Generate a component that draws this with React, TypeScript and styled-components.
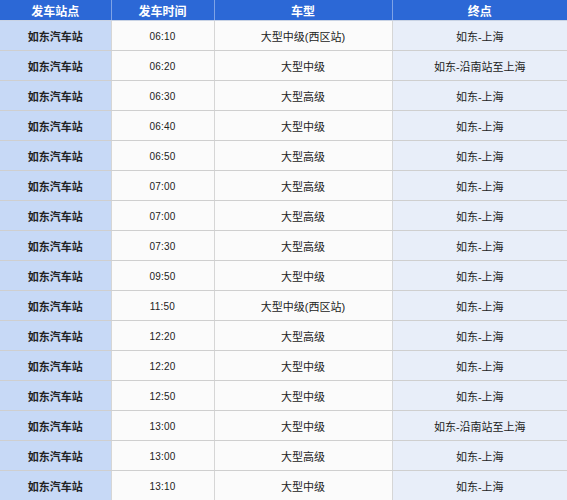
import React from 'react'
import styled, { createGlobalStyle } from 'styled-components'

const GlobalStyle = createGlobalStyle`
    html, body {
        margin: 0;
        padding: 0;
        background: #ffffff;
    }
`;

const Table = styled.table`
    width: 567px;
    border-collapse: collapse;
    table-layout: fixed;
    font-family: "Liberation Sans", "Noto Sans CJK SC", sans-serif;
    font-size: 11px;
    color: #222222;
`;

const HeadCell = styled.th`
    height: 20px;
    padding: 0;
    background: #2c68d6;
    color: #ffffff;
    font-weight: bold;
    font-size: 12px;
    text-align: center;
    border-right: 1px solid #7fa3e6;
    border-bottom: 1px solid #c9d3e4;
    &:last-child { border-right: none; }
`;

const Cell = styled.td<{ $tone: 'station' | 'plain' | 'dest' }>`
    height: 29px;
    padding: 0;
    text-align: center;
    border-bottom: 1px solid #cfcfcf;
    border-right: 1px solid #d6d6d6;
    background: ${p => p.$tone === 'station' ? '#c7d9f6' : p.$tone === 'dest' ? '#e8eef9' : '#fbfbfb'};
    font-weight: ${p => p.$tone === 'station' ? 'bold' : 'normal'};
    &:last-child { border-right: none; }
`;

const Time = styled.span`
    font-family: "Liberation Sans", sans-serif;
    font-size: 10px;
    letter-spacing: 0.2px;
`;

const rows: [string, string, string][] = [
    ['06:10', '大型中级(西区站)', '如东-上海'],
    ['06:20', '大型中级', '如东-沿南站至上海'],
    ['06:30', '大型高级', '如东-上海'],
    ['06:40', '大型中级', '如东-上海'],
    ['06:50', '大型高级', '如东-上海'],
    ['07:00', '大型高级', '如东-上海'],
    ['07:00', '大型高级', '如东-上海'],
    ['07:30', '大型高级', '如东-上海'],
    ['09:50', '大型中级', '如东-上海'],
    ['11:50', '大型中级(西区站)', '如东-上海'],
    ['12:20', '大型高级', '如东-上海'],
    ['12:20', '大型中级', '如东-上海'],
    ['12:50', '大型中级', '如东-上海'],
    ['13:00', '大型中级', '如东-沿南站至上海'],
    ['13:00', '大型高级', '如东-上海'],
    ['13:10', '大型中级', '如东-上海'],
];

export default function App() {
    return (
        <>
            <GlobalStyle />
            <Table>
                <colgroup>
                    <col style={{ width: 111 }} />
                    <col style={{ width: 103 }} />
                    <col style={{ width: 178 }} />
                    <col style={{ width: 175 }} />
                </colgroup>
                <thead>
                    <tr>
                        <HeadCell>发车站点</HeadCell>
                        <HeadCell>发车时间</HeadCell>
                        <HeadCell>车型</HeadCell>
                        <HeadCell>终点</HeadCell>
                    </tr>
                </thead>
                <tbody>
                    {rows.map(([time, type, dest], i) => (
                        <tr key={i}>
                            <Cell $tone="station">如东汽车站</Cell>
                            <Cell $tone="plain"><Time>{time}</Time></Cell>
                            <Cell $tone="plain">{type}</Cell>
                            <Cell $tone="dest">{dest}</Cell>
                        </tr>
                    ))}
                </tbody>
            </Table>
        </>
    );
}
